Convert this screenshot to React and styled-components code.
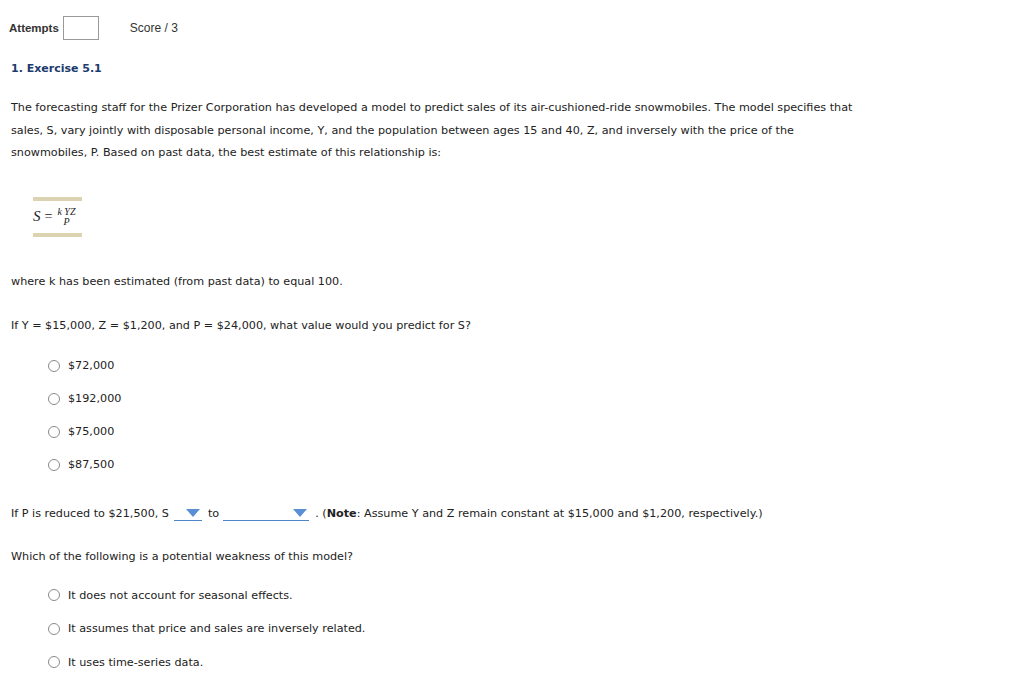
import React from "react";
import styled, { createGlobalStyle } from "styled-components";

const Global = createGlobalStyle`
  body {
    margin: 0;
    background: #fff;
    color: #222;
    font-family: "DejaVu Sans", Verdana, sans-serif;
  }
`;

const Page = styled.div`
  padding: 15px 11px 0 11px;
  font-size: 11.2px;
`;

const TopBar = styled.div`
  display: flex;
  align-items: center;
  height: 26px;
  margin-left: -2px;
  font-family: "Liberation Sans", Arial, sans-serif;
`;

const Label = styled.span`
  font-size: 11.5px;
  font-weight: bold;
  color: #333;
  margin-right: 4px;
`;

const AttemptBox = styled.div`
  width: 34px;
  height: 22px;
  border: 1px solid #999;
`;

const Score = styled.span`
  margin-left: 31px;
  font-size: 12px;
  color: #333;
`;

const Heading = styled.div`
  margin-top: 21px;
  font-weight: bold;
  font-size: 11px;
  color: #1d3b6e;
`;

const Para = styled.p`
  margin: ${(p) => p.$top || 0}px 0 0 0;
  line-height: 22.5px;
`;

const Equation = styled.div`
  margin: 32px 0 0 22px;
  width: 49px;
  border-top: 4px solid #dcd3b2;
  border-bottom: 4px solid #dcd3b2;
  height: 32px;
  display: flex;
  align-items: center;
  font-family: "Liberation Serif", "Times New Roman", serif;
  font-size: 14px;
`;

const EqS = styled.span`
  font-style: italic;
  font-size: 15px;
  margin-right: 4px;
`;

const Frac = styled.span`
  display: inline-flex;
  flex-direction: column;
  align-items: center;
  margin-left: 5px;
  font-size: 10px;
  font-style: italic;
  line-height: 10px;
`;

const Options = styled.div`
  margin: ${(p) => p.$top}px 0 0 37px;
  display: flex;
  flex-direction: column;
  gap: ${(p) => p.$gap}px;
`;

const Option = styled.label`
  display: flex;
  align-items: center;
  height: 14px;
`;

const Radio = styled.span`
  width: 10px;
  height: 10px;
  border: 1px solid #8a8a8a;
  border-radius: 50%;
  margin-right: 8px;
`;

const Inline = styled.div`
  margin-top: 31px;
  display: flex;
  align-items: center;
  line-height: 22px;
`;

const Select = styled.span`
  display: inline-flex;
  justify-content: flex-end;
  align-items: center;
  width: ${(p) => p.$w}px;
  height: 14px;
  border-bottom: 1px solid #4f86c9;
  margin: 0 ${(p) => p.$mr}px 0 ${(p) => p.$ml}px;
  padding-right: 2px;
  box-sizing: border-box;
`;

const Caret = styled.span`
  width: 0;
  height: 0;
  border-left: 7px solid transparent;
  border-right: 7px solid transparent;
  border-top: 8px solid #5b8fd3;
`;

const Answer = ({ children }) => (
  <Option>
    <Radio />
    {children}
  </Option>
);

export default function App() {
  return (
    <>
      <Global />
      <Page>
        <TopBar>
          <Label>Attempts</Label>
          <AttemptBox />
          <Score>Score / 3</Score>
        </TopBar>
        <Heading>1. Exercise 5.1</Heading>
        <Para $top={22}>
          The forecasting staff for the Prizer Corporation has developed a model to predict sales of its
          air-cushioned-ride snowmobiles. The model specifies that
          <br />
          sales, S, vary jointly with disposable personal income, Y, and the population between ages 15
          and 40, Z, and inversely with the price of the
          <br />
          snowmobiles, P. Based on past data, the best estimate of this relationship is:
        </Para>
        <Equation>
          <EqS>S</EqS>=
          <Frac>
            <span>k YZ</span>
            <span>P</span>
          </Frac>
        </Equation>
        <Para $top={34}>where k has been estimated (from past data) to equal 100.</Para>
        <Para $top={22}>
          If Y = $15,000, Z = $1,200, and P = $24,000, what value would you predict for S?
        </Para>
        <Options $top={21} $gap={19}>
          <Answer>$72,000</Answer>
          <Answer>$192,000</Answer>
          <Answer>$75,000</Answer>
          <Answer>$87,500</Answer>
        </Options>
        <Inline>
          If P is reduced to $21,500, S
          <Select $w={28} $ml={5} $mr={6}>
            <Caret />
          </Select>
          to
          <Select $w={86} $ml={4} $mr={6}>
            <Caret />
          </Select>
          . (<b>Note</b>: Assume Y and Z remain constant at $15,000 and $1,200, respectively.)
        </Inline>
        <Para $top={21}>Which of the following is a potential weakness of this model?</Para>
        <Options $top={20} $gap={19.5}>
          <Answer>It does not account for seasonal effects.</Answer>
          <Answer>It assumes that price and sales are inversely related.</Answer>
          <Answer>It uses time-series data.</Answer>
        </Options>
      </Page>
    </>
  );
}
